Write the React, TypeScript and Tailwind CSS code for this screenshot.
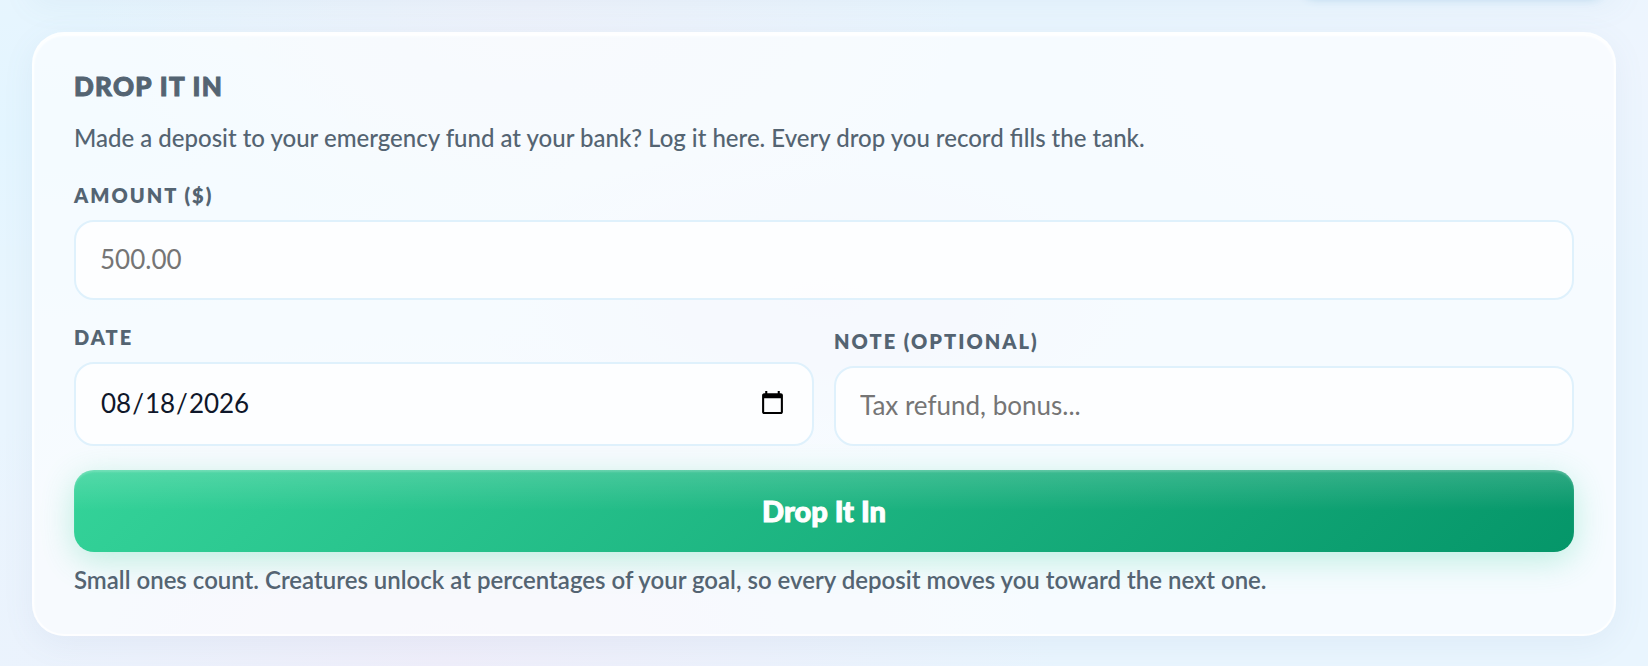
import { useState } from 'react';

const labelClass =
  'block text-[20px] leading-[26px] font-extrabold uppercase tracking-widest text-[#546472]';
const inputClass =
  'mt-3 block w-full rounded-[20px] border-2 border-[#dff1fc] bg-white/75 px-6 pb-0.5 text-[26px] leading-[36px] text-[#0f172a] placeholder:text-[#757575] outline-none focus:border-[#7dd3fc]';

export default function App() {
  const [amount, setAmount] = useState('');
  const [date, setDate] = useState('2026-08-18');
  const [note, setNote] = useState('');

  return (
    <main className="relative min-h-screen overflow-hidden bg-[#e9f5fe] bg-[radial-gradient(ellipse_at_27%_100%,#efeefa_0%,transparent_36%),radial-gradient(ellipse_at_32%_0%,#eef2fb_0%,transparent_28%),radial-gradient(ellipse_at_50%_45%,#e8eefc_0%,transparent_30%),radial-gradient(ellipse_at_0%_20%,#e3f5ff_0%,transparent_30%),radial-gradient(ellipse_at_100%_10%,#eef5fe_0%,transparent_25%)] p-8 pb-[30px] font-[Lato,sans-serif]">
      <div className="absolute -top-10 right-[40px] h-10 w-[310px] rounded-full shadow-[0_0_8px_#c3e1f3]" />
      <div className="absolute -top-10 right-8 left-8 h-10 shadow-[0_4px_32px_rgba(100,150,180,0.08)]" />
      <section className="relative rounded-[32px] border-2 border-white/80 bg-white/60 px-10 pt-8 pb-[34px] shadow-[0_8px_32px_rgba(100,130,170,0.08),inset_0_2px_2px_white]">
        <form onSubmit={(event) => event.preventDefault()}>
          <h2 className="text-[26px] leading-[40px] font-black uppercase tracking-wider text-[#546472] [-webkit-text-stroke:1px_#546472]">
            Drop It In
          </h2>
          <p className="mt-3 text-[24px] leading-[40px] font-medium text-[#546472]">
            Made a deposit to your emergency fund at your bank? Log it here. Every drop you record fills the tank.
          </p>
          <div className="mt-6">
            <label htmlFor="amount" className={labelClass}>Amount ($)</label>
            <input
              id="amount"
              inputMode="decimal"
              placeholder="500.00"
              value={amount}
              onChange={(event) => setAmount(event.target.value)}
              className={`h-20 ${inputClass}`}
            />
          </div>
          <div className="mt-6 grid grid-cols-2 items-end gap-5">
            <div>
              <label htmlFor="date" className={labelClass}>Date</label>
              <input
                id="date"
                type="date"
                value={date}
                onChange={(event) => setDate(event.target.value)}
                className={`h-[84px] ${inputClass} [&::-webkit-calendar-picker-indicator]:size-[27px]`}
              />
            </div>
            <div>
              <label htmlFor="note" className={labelClass}>Note (optional)</label>
              <input
                id="note"
                placeholder="Tax refund, bonus..."
                value={note}
                onChange={(event) => setNote(event.target.value)}
                className={`h-20 ${inputClass}`}
              />
            </div>
          </div>
          <button
            type="submit"
            className="mt-6 block h-[82px] w-full cursor-pointer rounded-[20px] bg-[linear-gradient(180deg,rgba(255,255,255,0.16),transparent_50%),linear-gradient(135deg,#34d399,#059669)] text-[29px] font-black text-white shadow-[0_8px_32px_rgba(52,211,153,0.3),inset_0_2px_2px_rgba(255,255,255,0.18)] [-webkit-text-stroke:1px_white]"
          >
            Drop It In
          </button>
          <p className="mt-2 text-[24px] leading-[40px] font-semibold text-[#546472]">
            Small ones count. Creatures unlock at percentages of your goal, so every deposit moves you toward the next one.
          </p>
        </form>
      </section>
    </main>
  );
}
